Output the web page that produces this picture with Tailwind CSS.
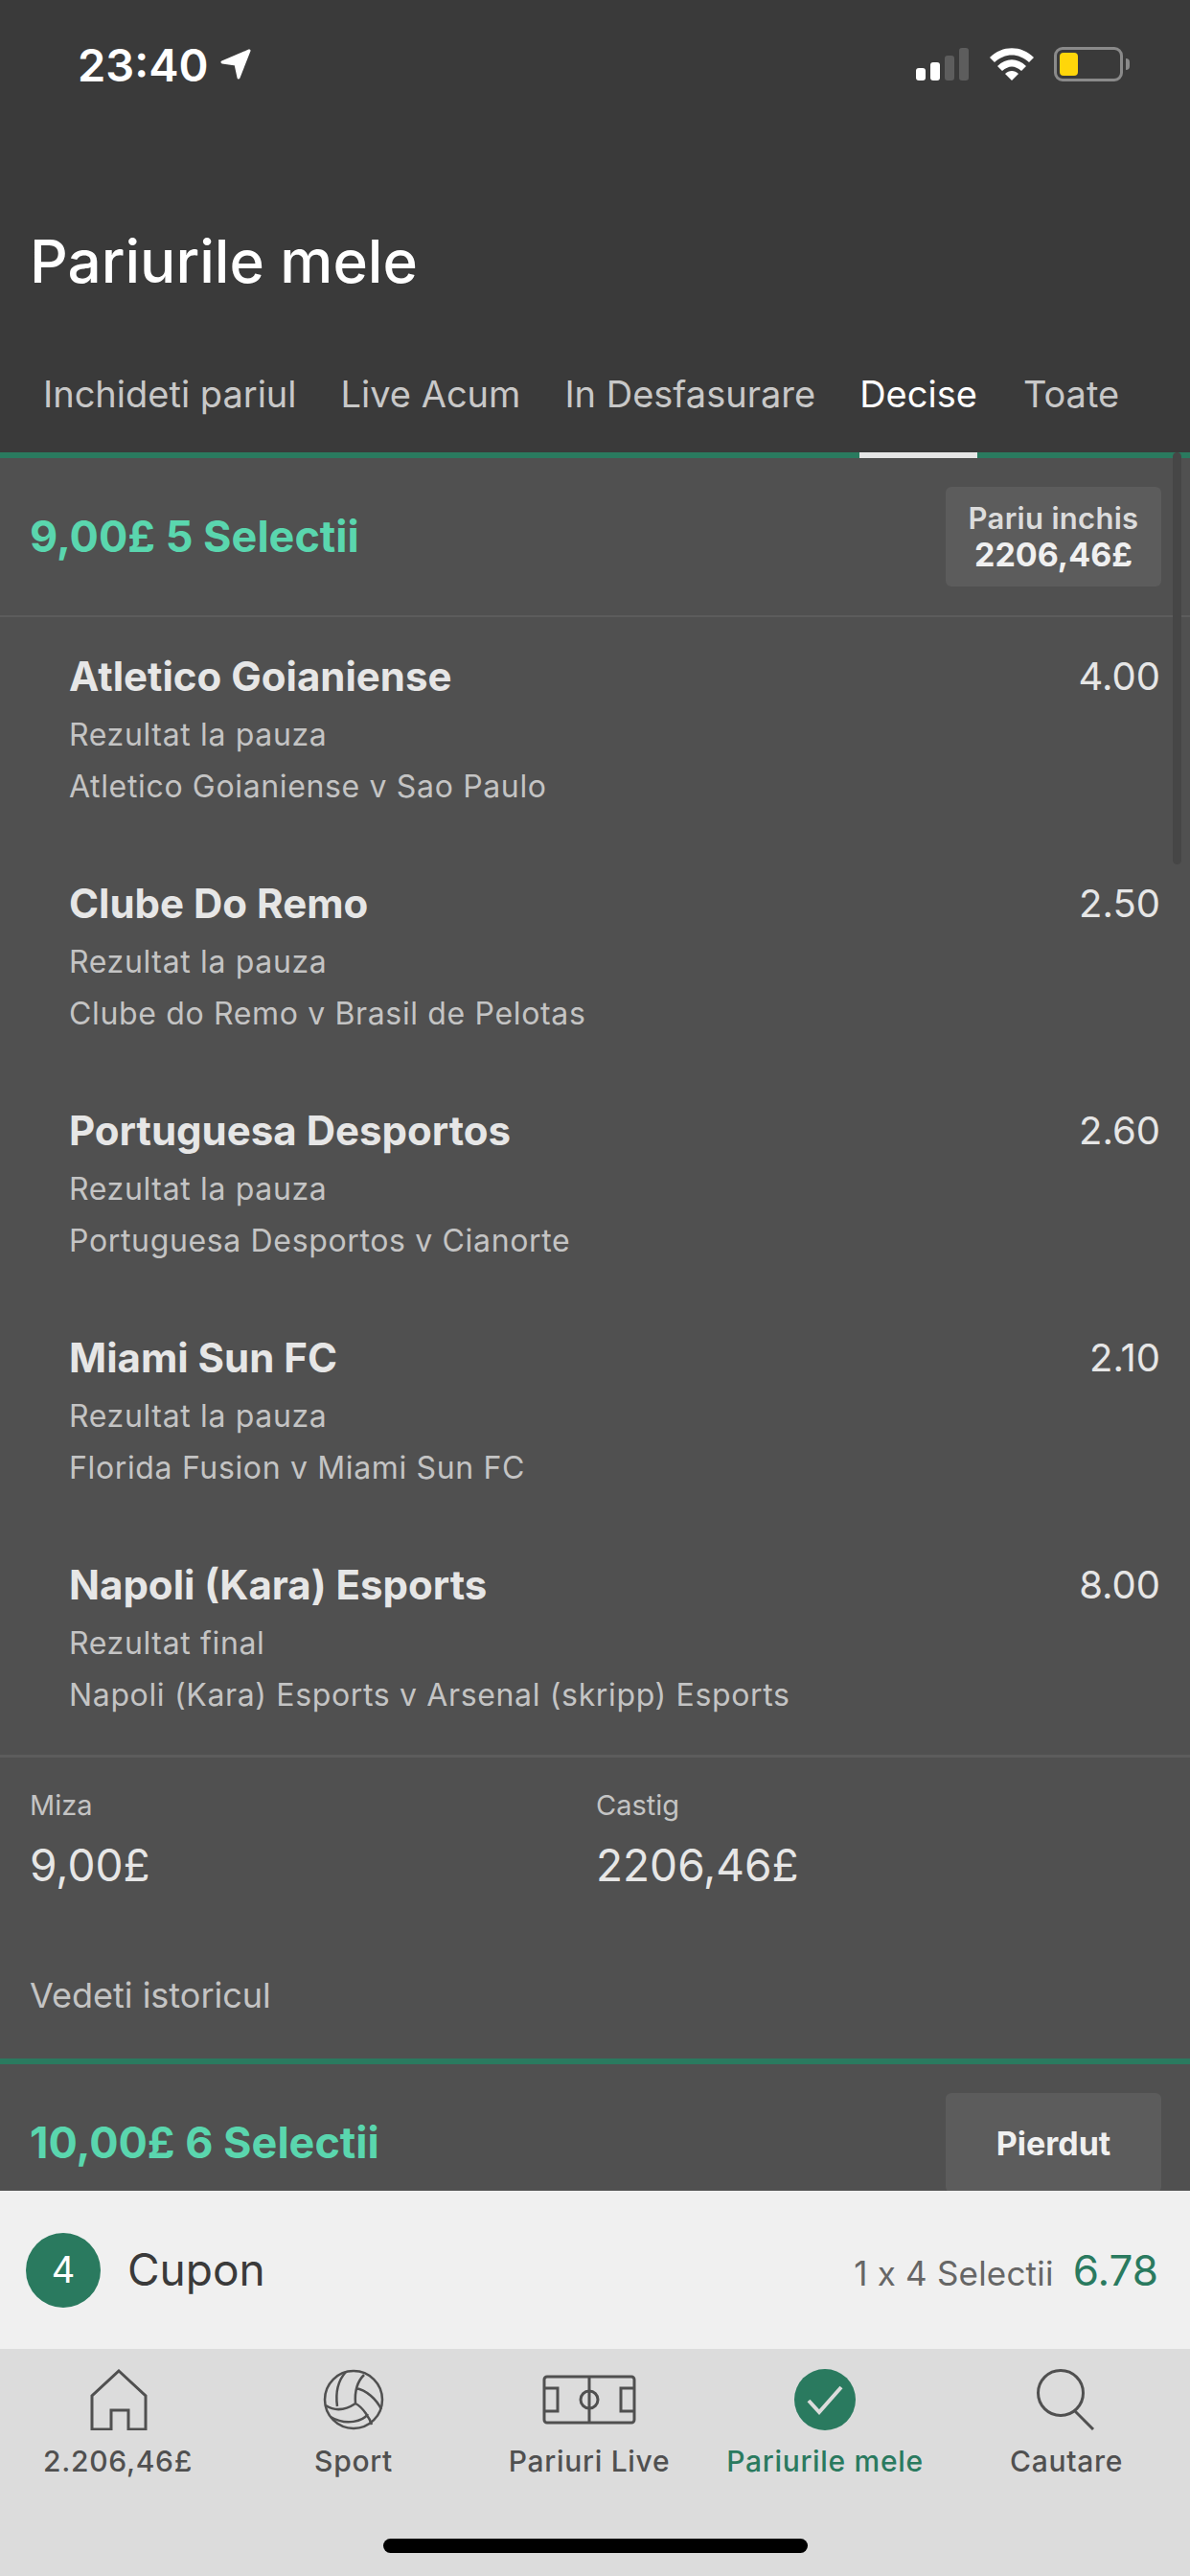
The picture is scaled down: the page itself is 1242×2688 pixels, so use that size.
<!DOCTYPE html>
<html lang="en">
<head>
  <meta charset="UTF-8" />
  <title>Pariurile mele</title>
  <script src="https://cdn.jsdelivr.net/npm/@tailwindcss/browser@4"></script>
</head>
<body class="bg-[#505050]">
  <div class="relative w-[1242px] h-[2688px] flex flex-col overflow-hidden font-['Inter',sans-serif]">

    <!-- Status bar + title + tabs -->
    <header class="bg-[#3a3a3a] h-[478px] shrink-0 flex flex-col border-b-[6px] border-[#2a7a5f]">
      <div class="h-[134px] shrink-0 flex items-center justify-between pl-[81px] pr-[63px]">
        <div class="flex items-center gap-[12px] text-white text-[47px] font-semibold leading-none">
          <span>23:40</span>
          <svg class="w-[34px] h-[34px]" viewBox="0 0 34 34"><path d="M31 3 L3 15 L17 17 L20 31 Z" fill="#fff" stroke="#fff" stroke-width="3" stroke-linejoin="round"/></svg>
        </div>
        <div class="flex items-center gap-[20px]">
          <svg class="w-[56px] h-[36px]" viewBox="0 0 56 36">
            <rect x="0" y="22" width="10" height="13" rx="3" fill="#fff"/>
            <rect x="15" y="16" width="10" height="19" rx="3" fill="#fff"/>
            <rect x="30" y="9" width="10" height="26" rx="3" fill="#5d5d5d"/>
            <rect x="45" y="1" width="10" height="34" rx="3" fill="#5d5d5d"/>
          </svg>
          <svg class="w-[48px] h-[36px]" viewBox="0 0 48 36">
            <path d="M1 11 C14 -2 34 -2 47 11 L42 16 C31 6 17 6 6 16 Z" fill="#fff"/>
            <path d="M9 20 C18 11 30 11 39 20 L34 25 C27 19 21 19 14 25 Z" fill="#fff"/>
            <path d="M17 28 C21 24 27 24 31 28 L24 35 Z" fill="#fff"/>
          </svg>
          <div class="flex items-center gap-[3px]">
            <div class="w-[72px] h-[36px] rounded-[9px] border-[3px] border-[#8a8a8a] p-[3px]">
              <div class="w-[19px] h-full rounded-[4px] bg-[#ffd60a]"></div>
            </div>
            <div class="w-[4px] h-[12px] rounded-r-full bg-[#8a8a8a]"></div>
          </div>
        </div>
      </div>
      <h1 class="mt-[104px] ml-[31px] text-[62px] leading-[70px] font-medium text-white">Pariurile mele</h1>
      <nav class="mt-auto h-[110px] flex text-[38px] text-[#c8c8c8]">
        <a class="ml-[45px] pt-[21px]">Inchideti pariul</a>
        <a class="ml-[46px] pt-[21px]">Live Acum</a>
        <a class="ml-[46px] pt-[21px]">In Desfasurare</a>
        <a class="ml-[46px] pt-[21px] text-white border-b-[6px] border-[#e6e6e6] -mb-[6px]">Decise</a>
        <a class="ml-[48px] pt-[21px]">Toate</a>
      </nav>
    </header>

    <main class="flex-1 min-h-0 overflow-hidden bg-[#505050]">
      <!-- Bet 1 -->
      <section class="h-[166px] flex items-center justify-between pl-[31px] pr-[30px] border-b-[2px] border-[#5c5c5c]">
        <span class="text-[45px] font-bold text-[#5ad6ae]">9,00£ 5 Selectii</span>
        <div class="w-[225px] h-[104px] rounded-[6px] bg-[#5c5c5c] flex flex-col items-center justify-center text-[31px] leading-[38px] font-semibold tracking-[0.3px] text-[#dcdcdc]">
          <span>Pariu inchis</span>
          <span class="text-[34px] tracking-normal text-[#f0f0f0] font-bold">2206,46£</span>
        </div>
      </section>

      <div class="h-[1187px] pt-[32px]">
        <article class="h-[237px] flex justify-between pl-[72px] pr-[31px]">
          <div>
            <p class="text-[42px] leading-[60px] font-bold text-[#e6e6e6]">Atletico Goianiense</p>
            <p class="mt-[11px] text-[32px] leading-[40px] tracking-[0.65px] text-[#c4c4c4]">Rezultat la pauza</p>
            <p class="mt-[14px] text-[32px] leading-[40px] tracking-[0.65px] text-[#c4c4c4]">Atletico Goianiense v Sao Paulo</p>
          </div>
          <span class="text-[40px] leading-[60px] text-[#e6e6e6]">4.00</span>
        </article>
        <article class="h-[237px] flex justify-between pl-[72px] pr-[31px]">
          <div>
            <p class="text-[42px] leading-[60px] font-bold text-[#e6e6e6]">Clube Do Remo</p>
            <p class="mt-[11px] text-[32px] leading-[40px] tracking-[0.65px] text-[#c4c4c4]">Rezultat la pauza</p>
            <p class="mt-[14px] text-[32px] leading-[40px] tracking-[0.65px] text-[#c4c4c4]">Clube do Remo v Brasil de Pelotas</p>
          </div>
          <span class="text-[40px] leading-[60px] text-[#e6e6e6]">2.50</span>
        </article>
        <article class="h-[237px] flex justify-between pl-[72px] pr-[31px]">
          <div>
            <p class="text-[42px] leading-[60px] font-bold text-[#e6e6e6]">Portuguesa Desportos</p>
            <p class="mt-[11px] text-[32px] leading-[40px] tracking-[0.65px] text-[#c4c4c4]">Rezultat la pauza</p>
            <p class="mt-[14px] text-[32px] leading-[40px] tracking-[0.65px] text-[#c4c4c4]">Portuguesa Desportos v Cianorte</p>
          </div>
          <span class="text-[40px] leading-[60px] text-[#e6e6e6]">2.60</span>
        </article>
        <article class="h-[237px] flex justify-between pl-[72px] pr-[31px]">
          <div>
            <p class="text-[42px] leading-[60px] font-bold text-[#e6e6e6]">Miami Sun FC</p>
            <p class="mt-[11px] text-[32px] leading-[40px] tracking-[0.65px] text-[#c4c4c4]">Rezultat la pauza</p>
            <p class="mt-[14px] text-[32px] leading-[40px] tracking-[0.65px] text-[#c4c4c4]">Florida Fusion v Miami Sun FC</p>
          </div>
          <span class="text-[40px] leading-[60px] text-[#e6e6e6]">2.10</span>
        </article>
        <article class="h-[198px] flex justify-between pl-[72px] pr-[31px]">
          <div>
            <p class="text-[42px] leading-[60px] font-bold text-[#e6e6e6]">Napoli (Kara) Esports</p>
            <p class="mt-[11px] text-[32px] leading-[40px] tracking-[0.65px] text-[#c4c4c4]">Rezultat final</p>
            <p class="mt-[14px] text-[32px] leading-[40px] tracking-[0.65px] text-[#c4c4c4]">Napoli (Kara) Esports v Arsenal (skripp) Esports</p>
          </div>
          <span class="text-[40px] leading-[60px] text-[#e6e6e6]">8.00</span>
        </article>
      </div>

      <section class="h-[323px] border-t-[3px] border-b-[6px] border-t-[#5c5c5c] border-b-[#2a7a5f] px-[31px] pt-[32px]">
        <div class="grid grid-cols-[591px_1fr]">
          <div>
            <p class="text-[29px] leading-[36px] text-[#c4c4c4]">Miza</p>
            <p class="mt-[16px] text-[46px] leading-[56px] text-[#e6e6e6]">9,00£</p>
          </div>
          <div>
            <p class="text-[29px] leading-[36px] text-[#c4c4c4]">Castig</p>
            <p class="mt-[16px] text-[46px] leading-[56px] text-[#e6e6e6]">2206,46£</p>
          </div>
        </div>
        <p class="mt-[86px] text-[36px] leading-[44px] text-[#c4c4c4]">Vedeti istoricul</p>
      </section>

      <!-- Bet 2 -->
      <section class="h-[166px] flex items-start justify-between pl-[31px] pr-[30px] pt-[30px]">
        <span class="text-[45px] font-bold leading-[104px] text-[#5ad6ae]">10,00£ 6 Selectii</span>
        <div class="w-[225px] h-[104px] rounded-[6px] bg-[#5c5c5c] flex items-center justify-center text-[34px] font-bold text-[#f0f0f0]">Pierdut</div>
      </section>
    </main>

    <!-- Coupon bar -->
    <div class="bg-[#f0f0f0] h-[165px] shrink-0 flex items-center justify-between pl-[27px] pr-[33px]">
      <div class="flex items-center gap-[28px]">
        <span class="w-[78px] h-[78px] rounded-full bg-[#2a7a5f] text-white text-[38px] flex items-center justify-center">4</span>
        <span class="text-[46px] text-[#3a3a3a]">Cupon</span>
      </div>
      <div class="flex items-baseline gap-[20px]">
        <span class="text-[35px] tracking-[0.2px] text-[#666666] [font-feature-settings:'calt'_0]">1 x 4 Selectii</span>
        <span class="text-[44px] text-[#2a7a5f]">6.78</span>
      </div>
    </div>

    <!-- Bottom nav -->
    <nav class="bg-[#dcdcdc] h-[237px] shrink-0 grid grid-cols-[246px_246px_246px_246px_258px] content-start pt-[21px] text-[30px] font-medium tracking-[0.7px] text-[#505050]">
      <a class="flex flex-col items-center gap-[10px]">
        <svg class="w-[64px] h-[64px]" viewBox="0 0 64 64" fill="none" stroke="#505050" stroke-width="3"><path d="M33 2 L61 28 V63 H43 V43 H25 V63 H5 V28 Z"/></svg>
        <span>2.206,46£</span>
      </a>
      <a class="flex flex-col items-center gap-[10px]">
        <svg class="w-[64px] h-[64px]" viewBox="0 0 64 64" fill="none" stroke="#505050" stroke-width="2.5"><circle cx="32" cy="32" r="30"/><path d="M24 3 C15 13 13 25 15 39 M43 6 C35 14 33 24 34 36 M34 20 C46 22 56 32 61 42 M3 38 C14 45 25 42 34 36 C42 40 49 52 51 58 M8 50 C25 60 42 54 47 47"/></svg>
        <span>Sport</span>
      </a>
      <a class="flex flex-col items-center gap-[10px]">
        <svg class="w-[98px] h-[64px]" viewBox="0 0 98 64" fill="none" stroke="#505050" stroke-width="3"><rect x="2" y="8" width="94" height="48" rx="3"/><path d="M49 8 V56 M2 20 H16 V44 H2 M96 20 H82 V44 H96"/><circle cx="49" cy="32" r="9"/></svg>
        <span>Pariuri Live</span>
      </a>
      <a class="flex flex-col items-center gap-[10px] text-[#2a7a5f]">
        <svg class="w-[64px] h-[64px]" viewBox="0 0 64 64"><circle cx="32" cy="32" r="32" fill="#2a7a5f"/><path d="M15 33 L26 45 L49 19" fill="none" stroke="#dcdcdc" stroke-width="4"/></svg>
        <span>Pariurile mele</span>
      </a>
      <a class="flex flex-col items-center gap-[10px]">
        <svg class="w-[64px] h-[64px]" viewBox="0 0 64 64" fill="none" stroke="#505050" stroke-width="3"><circle cx="26" cy="25" r="23.5"/><path d="M41 44 L60 63"/></svg>
        <span>Cautare</span>
      </a>
    </nav>

    <!-- Home indicator -->
    <div class="absolute left-[400px] top-[2649px] w-[443px] h-[15px] rounded-full bg-black"></div>
    <!-- Scroll indicator -->
    <div class="absolute left-[1224px] top-[472px] w-[9px] h-[430px] rounded-full bg-[#464646]"></div>
  </div>
</body>
</html>
